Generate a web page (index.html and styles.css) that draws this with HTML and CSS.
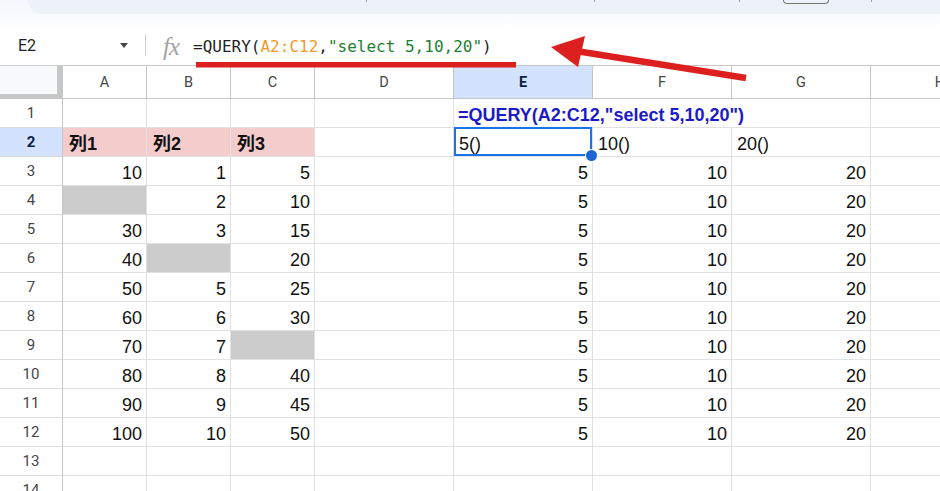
FILE: index.html
```html
<!DOCTYPE html>
<html lang="ja">
<head>
<meta charset="utf-8">
<title>QUERY select</title>
<link rel="stylesheet" href="styles.css">
</head>
<body>
<div class="app">
  <div class="top">
    <div class="pill">
      <span class="tick t1"></span>
      <span class="tick t2"></span>
      <span class="tick t3"></span>
      <span class="btn"></span>
      <span class="tick t4"></span>
    </div>
  </div>

  <div class="fbar">
    <div class="namebox">
      <span class="ref">E2</span>
      <span class="caret"></span>
    </div>
    <span class="vsep"></span>
    <span class="fx">fx</span>
    <div class="formula">=QUERY(<span class="rng">A2:C12</span>,<span class="str">"select 5,10,20"</span>)</div>
  </div>

  <div class="grid">
    <div class="corner"></div>
    <div class="ch">A</div><div class="ch">B</div><div class="ch">C</div><div class="ch">D</div><div class="ch sel">E</div><div class="ch">F</div><div class="ch">G</div><div class="ch">H</div>

    <div class="rh">1</div><div class="c"></div><div class="c"></div><div class="c"></div><div class="c"></div><div class="c e1">=QUERY(A2:C12,"select 5,10,20")</div><div class="c"></div>

    <div class="rh sel">2</div><div class="c pk">列1</div><div class="c pk">列2</div><div class="c pk">列3</div><div class="c"></div><div class="c active">5()</div><div class="c">10()</div><div class="c">20()</div><div class="c"></div>

    <div class="rh">3</div><div class="c r">10</div><div class="c r">1</div><div class="c r">5</div><div class="c"></div><div class="c r">5</div><div class="c r">10</div><div class="c r">20</div><div class="c"></div>
    <div class="rh">4</div><div class="c gy"></div><div class="c r">2</div><div class="c r">10</div><div class="c"></div><div class="c r">5</div><div class="c r">10</div><div class="c r">20</div><div class="c"></div>
    <div class="rh">5</div><div class="c r">30</div><div class="c r">3</div><div class="c r">15</div><div class="c"></div><div class="c r">5</div><div class="c r">10</div><div class="c r">20</div><div class="c"></div>
    <div class="rh">6</div><div class="c r">40</div><div class="c gy"></div><div class="c r">20</div><div class="c"></div><div class="c r">5</div><div class="c r">10</div><div class="c r">20</div><div class="c"></div>
    <div class="rh">7</div><div class="c r">50</div><div class="c r">5</div><div class="c r">25</div><div class="c"></div><div class="c r">5</div><div class="c r">10</div><div class="c r">20</div><div class="c"></div>
    <div class="rh">8</div><div class="c r">60</div><div class="c r">6</div><div class="c r">30</div><div class="c"></div><div class="c r">5</div><div class="c r">10</div><div class="c r">20</div><div class="c"></div>
    <div class="rh">9</div><div class="c r">70</div><div class="c r">7</div><div class="c gy"></div><div class="c"></div><div class="c r">5</div><div class="c r">10</div><div class="c r">20</div><div class="c"></div>
    <div class="rh">10</div><div class="c r">80</div><div class="c r">8</div><div class="c r">40</div><div class="c"></div><div class="c r">5</div><div class="c r">10</div><div class="c r">20</div><div class="c"></div>
    <div class="rh">11</div><div class="c r">90</div><div class="c r">9</div><div class="c r">45</div><div class="c"></div><div class="c r">5</div><div class="c r">10</div><div class="c r">20</div><div class="c"></div>
    <div class="rh">12</div><div class="c r">100</div><div class="c r">10</div><div class="c r">50</div><div class="c"></div><div class="c r">5</div><div class="c r">10</div><div class="c r">20</div><div class="c"></div>
    <div class="rh">13</div><div class="c"></div><div class="c"></div><div class="c"></div><div class="c"></div><div class="c"></div><div class="c"></div><div class="c"></div><div class="c"></div>
    <div class="rh">14</div><div class="c"></div><div class="c"></div><div class="c"></div><div class="c"></div><div class="c"></div><div class="c"></div><div class="c"></div><div class="c"></div>
  </div>

  <svg class="annot" width="940" height="491" viewBox="0 0 940 491" aria-hidden="true">
    <rect x="196" y="62" width="320" height="5.5" fill="#dc1f1f"/>
    <line x1="746" y1="78" x2="576" y2="51" stroke="#dc1f1f" stroke-width="6.5"/>
    <polygon points="551,47 585,36 578,67" fill="#dc1f1f"/>
  </svg>
</div>
</body>
</html>
```

FILE: styles.css
```css
* { box-sizing: border-box; }

html, body {
  margin: 0;
  padding: 0;
}

body {
  width: 940px;
  height: 491px;
  overflow: hidden;
  background: #ffffff;
  font-family: "Liberation Sans", "Noto Sans CJK JP", Arial, sans-serif;
  color: #111111;
}

.app {
  position: relative;
  width: 940px;
  height: 491px;
  overflow: hidden;
}

/* top toolbar remnant */
.top {
  height: 25px;
  background: linear-gradient(to bottom, #f4f7fc 0, #f7f9fd 14px, #fcfdfe 25px);
}

.pill {
  margin-left: 28px;
  height: 14px;
  background: #edf2f9;
  border-bottom-left-radius: 16px;
  display: flex;
  align-items: flex-start;
}

.tick {
  width: 1px;
  height: 2px;
  background: #9aa0a6;
}
.t1 { margin-left: 338px; }
.t2 { margin-left: 227px; }
.t3 { margin-left: 144px; }
.btn {
  margin-left: 43px;
  width: 46px;
  height: 4px;
  border: 1px solid #747775;
  border-top: none;
  border-radius: 0 0 5px 5px;
}
.t4 { margin-left: 42px; }

/* formula bar */
.fbar {
  height: 40px;
  display: flex;
  align-items: center;
  background: #ffffff;
}

.namebox {
  width: 145px;
  display: flex;
  align-items: center;
  justify-content: space-between;
  padding: 0 17px 0 18px;
}

.ref {
  font-family: Roboto, "Liberation Sans", sans-serif;
  font-size: 16px;
  color: #1f1f1f;
}

.caret {
  width: 0;
  height: 0;
  border-left: 4.5px solid transparent;
  border-right: 4.5px solid transparent;
  border-top: 5px solid #444746;
}

.vsep {
  width: 1px;
  height: 22px;
  background: #d0d0d0;
}

.fx {
  margin-left: 17px;
  font-family: "Liberation Serif", "DejaVu Serif", serif;
  font-style: italic;
  font-size: 25px;
  color: #a3a3a3;
  letter-spacing: -1px;
  line-height: 1;
  padding-top: 3px;
}

.formula {
  margin-left: 14px;
  font-family: "DejaVu Sans Mono", "Liberation Mono", monospace;
  font-size: 16px;
  color: #1f1f1f;
  white-space: nowrap;
  padding-top: 2px;
}
.rng { color: #f29a25; }
.str { color: #1e7e34; }

/* grid */
.grid {
  display: grid;
  grid-template-columns: 63px 84px 84px 84px 139px 139px 139px 139px 139px;
  grid-template-rows: 34px;
  grid-auto-rows: 29px;
}

.grid > div {
  border-right: 1px solid #e1e1e1;
  border-bottom: 1px solid #e1e1e1;
}

.corner {
  border-top: 1px solid #d0d0d0;
  background: #f8f9fa;
  border-right: 6px solid #c7c7c7 !important;
  border-bottom: 5px solid #c7c7c7 !important;
}

.ch {
  border-top: 1px solid #c4c7c5;
  border-right-color: #c4c7c5 !important;
  border-bottom-color: #c4c7c5 !important;
  display: flex;
  align-items: center;
  justify-content: center;
  font-family: Roboto, "Liberation Sans", sans-serif;
  font-size: 14.5px;
  color: #444746;
  padding-top: 1px;
}

.rh {
  border-right-color: #c4c7c5 !important;
  border-bottom-color: #dadce0 !important;
  display: flex;
  align-items: center;
  justify-content: center;
  font-family: Roboto, "Liberation Sans", sans-serif;
  font-size: 15px;
  color: #444746;
}

.ch.sel, .rh.sel {
  background: #d3e3fd;
  color: #0b1f44;
  font-weight: 700;
}

.c {
  display: flex;
  align-items: flex-end;
  padding: 0 4px 2px 5px;
  font-size: 18px;
  line-height: 20px;
  white-space: nowrap;
  position: relative;
}

.c.r { justify-content: flex-end; }

.c.pk {
  background: #f4cccc;
  font-weight: 700;
  padding-left: 6px;
}

.c.gy { background: #cccccc; }

.c.e1 {
  grid-column: span 3;
  font-weight: 700;
  color: #1b1bc8;
  padding-left: 4px;
}

.c.active { z-index: 2; }
.c.active::after {
  content: "";
  position: absolute;
  top: -1px;
  left: 0;
  right: 0;
  bottom: 0;
  border: 2px solid #1a73e8;
}
.c.active::before {
  content: "";
  position: absolute;
  right: -5px;
  bottom: -5px;
  width: 11px;
  height: 11px;
  border-radius: 50%;
  background: #1a66d6;
  box-shadow: 0 0 0 1px #ffffff;
  z-index: 3;
}

/* annotation overlay */
.annot {
  position: absolute;
  left: 0;
  top: 0;
  pointer-events: none;
}
```
